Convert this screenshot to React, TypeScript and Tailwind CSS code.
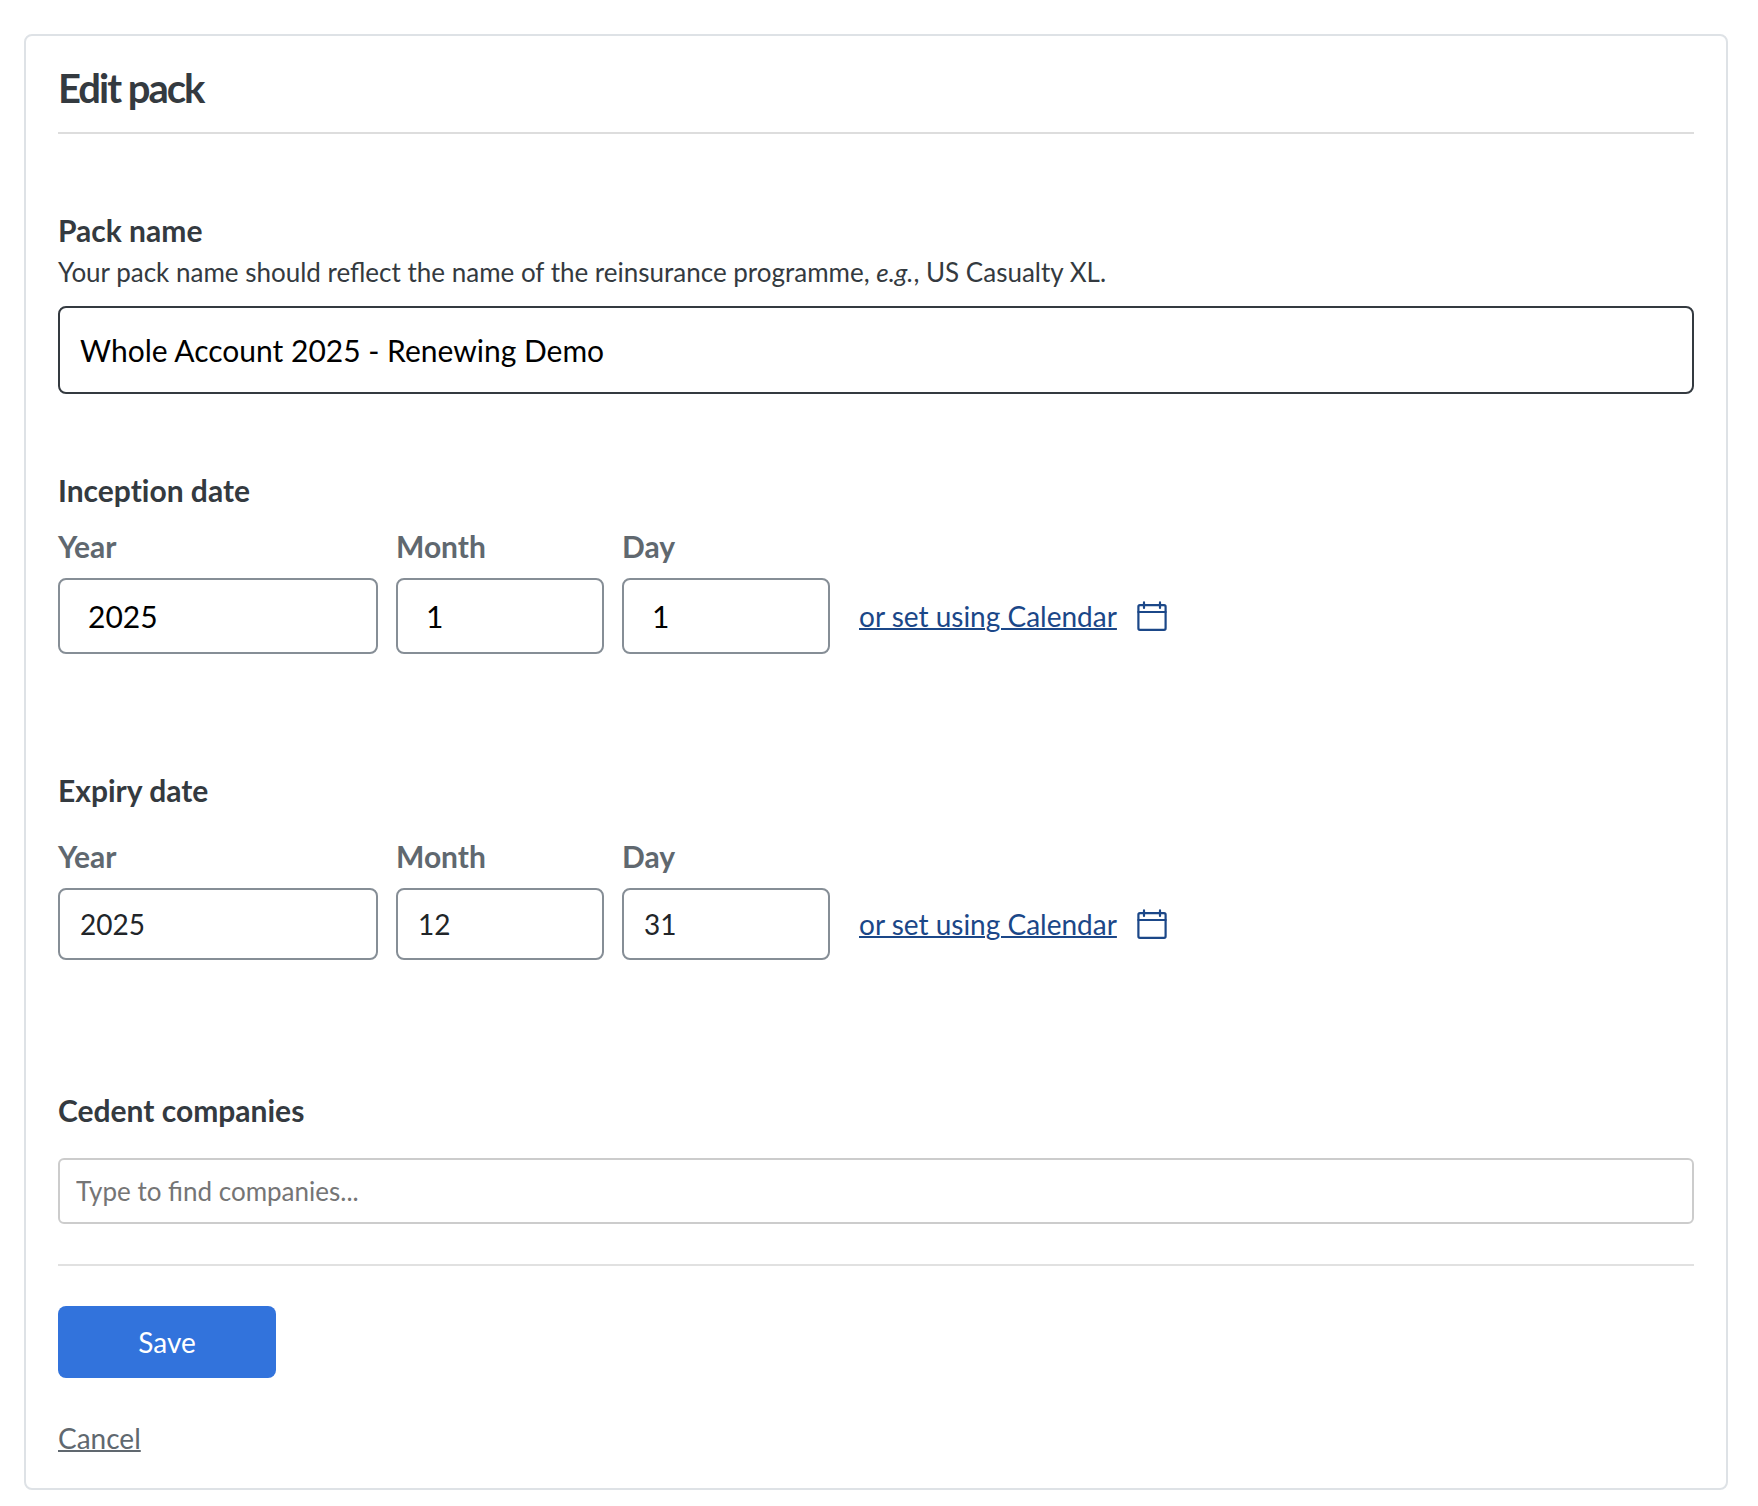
import { useState } from 'react';
import type { FormEvent } from 'react';

interface DateParts {
  year: string;
  month: string;
  day: string;
}

interface DateFieldsProps {
  id: string;
  value: DateParts;
  onChange: (value: DateParts) => void;
  large?: boolean;
}

const dateColumns: { key: keyof DateParts; label: string; width: string }[] = [
  { key: 'year', label: 'Year', width: 'w-80' },
  { key: 'month', label: 'Month', width: 'w-52' },
  { key: 'day', label: 'Day', width: 'w-52' },
];

function CalendarIcon() {
  return (
    <svg
      width="30"
      height="30"
      viewBox="0 0 30 30"
      fill="none"
      stroke="currentColor"
      strokeWidth="2.2"
      strokeLinecap="round"
      aria-hidden="true"
    >
      <rect x="1.4" y="4.2" width="27.2" height="24.6" rx="1.5" />
      <path d="M1.4 11h27.2" />
      <path d="M7 1.4v5.6M23 1.4v5.6" />
    </svg>
  );
}

function DateFields({ id, value, onChange, large = false }: DateFieldsProps) {
  const inputSize = large ? 'h-19 px-7 text-[30px] text-black' : 'h-18 px-5 text-[28px] text-[#212529]';

  return (
    <div className="flex items-end gap-[18px]">
      {dateColumns.map(({ key, label, width }) => (
        <div key={key} className={`flex flex-col gap-3.5 ${width}`}>
          <label htmlFor={`${id}-${key}`} className="text-[30px] leading-9 font-bold text-[#60686f]">
            {label}
          </label>
          <input
            id={`${id}-${key}`}
            type="text"
            inputMode="numeric"
            value={value[key]}
            onChange={(e) => onChange({ ...value, [key]: e.target.value })}
            className={`w-full rounded-lg border-2 border-[#868e96] bg-white ${inputSize}`}
          />
        </div>
      ))}
      <div className={`flex items-center pl-[11px] ${large ? 'h-19' : 'h-18'}`}>
        <a href="#calendar" className="flex items-center gap-5 text-[28px] leading-[34px] text-[#1b4788]">
          <span className="underline decoration-2">or set using Calendar</span>
          <CalendarIcon />
        </a>
      </div>
    </div>
  );
}

export default function App() {
  const [name, setName] = useState('Whole Account 2025 - Renewing Demo');
  const [inception, setInception] = useState<DateParts>({ year: '2025', month: '1', day: '1' });
  const [expiry, setExpiry] = useState<DateParts>({ year: '2025', month: '12', day: '31' });
  const [companies, setCompanies] = useState('');

  const handleSubmit = (e: FormEvent) => {
    e.preventDefault();
  };

  return (
    <main className="bg-white pt-[34px] pr-[30px] pb-4 pl-6 font-['Lato',sans-serif] text-[#343a40]">
      <form
        onSubmit={handleSubmit}
        className="rounded-lg border-2 border-[#dee2e6] px-8 pt-7 pb-[34px]"
      >
        <h1 className="border-b-2 border-[#dddddd] pb-5 text-[40px] leading-12 font-bold tracking-tighter">
          Edit pack
        </h1>

        <div className="mt-[78px]">
          <label htmlFor="pack-name" className="block text-[30px] leading-9 font-bold">
            Pack name
          </label>
          <p id="pack-name-help" className="mt-2 text-[26px] leading-8">
            Your pack name should reflect the name of the reinsurance programme, <em>e.g.</em>, US Casualty XL.
          </p>
          <input
            id="pack-name"
            type="text"
            aria-describedby="pack-name-help"
            value={name}
            onChange={(e) => setName(e.target.value)}
            className="mt-[18px] block h-22 w-full rounded-lg border-2 border-[#343a40] bg-white px-5 text-[30px] text-black"
          />
        </div>

        <fieldset className="mt-[78px]">
          <legend className="mb-5 text-[30px] leading-9 font-bold [font-variant-ligatures:none]">
            Inception date
          </legend>
          <DateFields id="inception" value={inception} onChange={setInception} large />
        </fieldset>

        <fieldset className="mt-[118px]">
          <legend className="mb-[30px] text-[30px] leading-9 font-bold">Expiry date</legend>
          <DateFields id="expiry" value={expiry} onChange={setExpiry} />
        </fieldset>

        <div className="mt-[132px]">
          <label htmlFor="companies" className="block text-[30px] leading-9 font-bold">
            Cedent companies
          </label>
          <input
            id="companies"
            type="text"
            value={companies}
            onChange={(e) => setCompanies(e.target.value)}
            placeholder="Type to find companies..."
            className="mt-[30px] block h-[66px] w-full rounded-md border-2 border-[#cccccc] bg-white px-4 text-[26px] placeholder:text-[#757575]"
          />
        </div>

        <div className="mt-10 flex flex-col items-start gap-11 border-t-2 border-[#e1e1e1] pt-10">
          <button
            type="submit"
            className="h-18 w-[218px] rounded-lg bg-[#3273dc] text-[28px] text-white"
          >
            Save
          </button>
          <a href="#cancel" className="text-[28px] leading-8 text-[#60686f] underline decoration-2">
            Cancel
          </a>
        </div>
      </form>
    </main>
  );
}
